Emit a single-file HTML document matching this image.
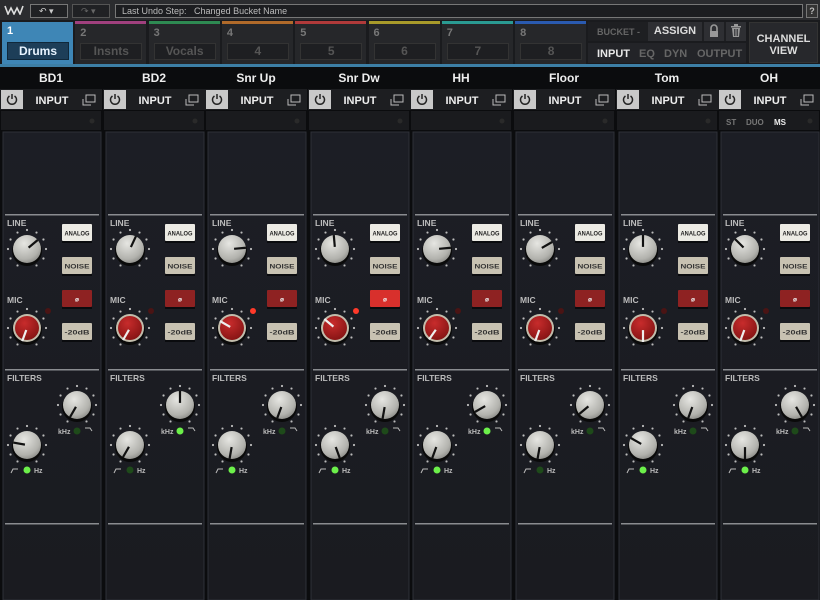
<!DOCTYPE html>
<html><head><meta charset="utf-8"><style>
*{margin:0;padding:0;box-sizing:border-box}
body{width:820px;height:600px;background:#0b0c0e;font-family:"Liberation Sans",sans-serif;position:relative;overflow:hidden;color:#ddd}
.a{position:absolute}
.t{font-weight:bold;font-size:11px;color:#e8e8e8}
</style></head><body>
<div class="a" style="left:0;top:0;width:820px;height:20px;background:#2b2c2f"></div>
<svg class="a" style="left:4px;top:5px" width="20" height="10"><path d="M1 1l3 8 3-6 3 6 3-6 3 6 3-8" fill="none" stroke="#ddd" stroke-width="1.6"/></svg>
<div class="a" style="left:30px;top:4px;width:38px;height:14px;border:1px solid #777;background:#202124;font-size:9px;color:#ccc;padding-left:8px;line-height:12px">↶ ▾</div>
<div class="a" style="left:72px;top:4px;width:38px;height:14px;border:1px solid #555;background:#202124;font-size:9px;color:#666;padding-left:8px;line-height:12px">↷ ▾</div>
<div class="a" style="left:115px;top:4px;width:688px;height:14px;border:1px solid #777;background:#1c1d20;font-size:9px;color:#bbb;padding-left:6px;line-height:12px">Last Undo Step:&nbsp;&nbsp; Changed Bucket Name</div>
<div class="a" style="left:806px;top:4px;width:12px;height:14px;border:1px solid #777;background:#333;font-size:9px;color:#bbb;text-align:center;line-height:12px;font-weight:bold">?</div>
<div class="a" style="left:0;top:20px;width:820px;height:46px;background:#1a1b1e"></div>
<div id="bk"></div>
<div class="a" style="left:0;top:64px;width:820px;height:3px;background:#3d7fa6"></div>
<div class="a" style="left:588px;top:22px;width:158px;height:19px;background:#1e1f22"></div>
<div class="a" style="left:597px;top:27px;font-size:9px;font-weight:bold;color:#666">BUCKET -</div>
<div class="a" style="left:648px;top:22px;width:54px;height:19px;background:#2e2f33;font-size:11px;font-weight:bold;color:#ddd;text-align:center;line-height:19px">ASSIGN</div>
<div class="a" style="left:704px;top:22px;width:20px;height:19px;background:#2e2f33"></div>
<svg class="a" style="left:708px;top:24px" width="12" height="14"><path d="M3 7V4a3 3 0 0 1 6 0v3" fill="none" stroke="#999" stroke-width="1.6"/><rect x="2" y="7" width="8" height="6" fill="#999"/></svg>
<div class="a" style="left:726px;top:22px;width:20px;height:19px;background:#2e2f33"></div>
<svg class="a" style="left:730px;top:24px" width="12" height="14"><rect x="1" y="2" width="10" height="1.5" fill="#999"/><rect x="4" y="0" width="4" height="2" fill="#999"/><path d="M2 4h8l-1 9H3z" fill="#999"/><path d="M4.5 5v7M6 5v7M7.5 5v7" stroke="#2e2f33" stroke-width=".8"/></svg>
<div class="a" style="left:588px;top:43px;width:158px;height:20px;background:#232428"></div>
<div class="a" style="left:597px;top:48px;font-size:11px;font-weight:bold;color:#e8e8e8">INPUT</div>
<div class="a" style="left:639px;top:48px;font-size:11px;font-weight:bold;color:#666">EQ</div>
<div class="a" style="left:664px;top:48px;font-size:11px;font-weight:bold;color:#666">DYN</div>
<div class="a" style="left:697px;top:48px;font-size:11px;font-weight:bold;color:#666">OUTPUT</div>
<div class="a" style="left:749px;top:22px;width:69px;height:41px;background:#27282c;border:1px solid #333;font-size:11px;font-weight:bold;color:#ddd;text-align:center;padding-top:10px;line-height:12px">CHANNEL<br>VIEW</div>
<div id="st"></div>
<script>
var cols=['#3d88b8','#a0407e','#2e8a52','#b06a2a','#b03a3a','#a89a2a','#2a9a92','#2a5ab0'];
var nm=['Drums','Insnts','Vocals','4','5','6','7','8'];
var h='';
for(var i=0;i<8;i++){var x=2+i*73.3;
 if(i==0){h+='<div class="a" style="left:'+x+'px;top:22px;width:71px;height:42px;background:#3e86b6"></div><div class="a t" style="left:'+(x+5)+'px;top:25px;font-size:11px;color:#fff">1</div><div class="a" style="left:'+(x+5)+'px;top:42px;width:62px;height:18px;background:#1d3e58;border:1px solid #10283a;font-size:12px;font-weight:bold;color:#e8f4ff;text-align:center;line-height:16px">Drums</div>';}
 else{h+='<div class="a" style="left:'+x+'px;top:21px;width:71px;height:3px;background:'+cols[i]+'"></div><div class="a" style="left:'+x+'px;top:24px;width:71px;height:40px;background:#26272a"></div><div class="a t" style="left:'+(x+5)+'px;top:27px;font-size:11px;color:#777">'+(i+1)+'</div><div class="a" style="left:'+(x+5)+'px;top:43px;width:62px;height:17px;background:#1e1f22;border:1px solid #333;font-size:12px;font-weight:bold;color:#555;text-align:center;line-height:15px">'+nm[i]+'</div>';}
}
document.getElementById('bk').innerHTML=h;
var ch=['BD1','BD2','Snr Up','Snr Dw','HH','Floor','Tom','OH'];
var la=[50,25,85,-5,85,60,0,-45], ma=[200,210,-60,-50,215,200,180,200], ha=[210,0,200,190,240,230,200,150], lo=[-80,210,190,160,200,190,-60,180];
var phOn=[0,0,0,1,0,0,0,0], ledR=[0,0,1,1,0,0,0,0], kOn=[0,1,0,0,1,0,0,0], hOn=[1,0,1,1,1,0,1,1];
function knob(cx,cy,r,a,red){var s='';for(var k=0;k<11;k++){var ang=(-150+k*30)*Math.PI/180;if(k==5)ang=0;var rr=r+5;s+='<circle cx="'+(cx+rr*Math.sin(ang))+'" cy="'+(cy-rr*Math.cos(ang))+'" r="1.1" fill="#bbb"/>';}
 var rad=a*Math.PI/180;
 s+='<circle cx="'+cx+'" cy="'+(cy+2)+'" r="'+(r+1)+'" fill="#0a0a0a"/>';
 if(red){s+='<circle cx="'+cx+'" cy="'+cy+'" r="'+r+'" fill="#c2bdac"/><circle cx="'+cx+'" cy="'+cy+'" r="'+(r-2)+'" fill="url(#rg)"/>';}
 else s+='<circle cx="'+cx+'" cy="'+cy+'" r="'+r+'" fill="url(#wg)"/>';
 s+='<line x1="'+(cx+(r*0.15)*Math.sin(rad))+'" y1="'+(cy-(r*0.15)*Math.cos(rad))+'" x2="'+(cx+r*Math.sin(rad))+'" y2="'+(cy-r*Math.cos(rad))+'" stroke="'+(red?'#eee':'#111')+'" stroke-width="2.2"/>';return s;}
function btn(x,y,t,bg,c){return '<rect x="'+x+'" y="'+(y+1)+'" width="30" height="18" fill="#000" opacity=".6"/><rect x="'+x+'" y="'+y+'" width="30" height="17" rx="1" fill="'+bg+'"/><text x="'+(x+15)+'" y="'+(y+11.5)+'" font-size="6.5" font-weight="bold" fill="'+c+'" text-anchor="middle" font-family="Liberation Sans"'+(t.length>4?' textLength="25" lengthAdjust="spacingAndGlyphs"':'')+'>'+t+'</text>';}
h='<svg class="a" style="left:0;top:0" width="820" height="600"><defs><radialGradient id="wg" cx=".4" cy=".3" r=".8"><stop offset="0" stop-color="#e6e6e2"/><stop offset=".7" stop-color="#b2b2ad"/><stop offset="1" stop-color="#80807c"/></radialGradient><radialGradient id="rg" cx=".4" cy=".3" r=".8"><stop offset="0" stop-color="#c82c2c"/><stop offset="1" stop-color="#801212"/></radialGradient><linearGradient id="pg" x1="0" y1="0" x2="0" y2="1"><stop offset="0" stop-color="#1c1e25"/><stop offset="1" stop-color="#1a1b20"/></linearGradient></defs>';
for(var i=0;i<8;i++){var x=Math.round(i*102.6);
 h+='<text x="'+(x+51)+'" y="82" font-size="12" font-weight="bold" fill="#eee" text-anchor="middle" font-family="Liberation Sans">'+ch[i]+'</text>';
 h+='<rect x="'+x+'" y="89" width="102" height="21" fill="#1d1e21"/><rect x="'+(x+1)+'" y="90" width="22" height="19" fill="#c9c9c9"/><path d="M'+(x+9.5)+' 96a4.5 4.5 0 1 0 5 0" fill="none" stroke="#222" stroke-width="1.5"/><path d="M'+(x+12)+' 94v5" stroke="#222" stroke-width="1.5"/>';
 h+='<text x="'+(x+52)+'" y="104" font-size="11" font-weight="bold" fill="#eee" text-anchor="middle" font-family="Liberation Sans">INPUT</text>';
 h+='<rect x="'+(x+86)+'" y="95" width="9" height="7" fill="none" stroke="#bbb"/><path d="M'+(x+83)+' 99v6h8" fill="none" stroke="#bbb"/>';
 h+='<rect x="'+(x+1)+'" y="111" width="100" height="19" fill="#1a1b1e"/><circle cx="'+(x+92)+'" cy="121" r="2.5" fill="#2a2a2a"/>';
 if(i==7){h+='<text x="'+(x+8)+'" y="125" font-size="8" font-weight="bold" fill="#777" font-family="Liberation Sans">ST</text><text x="'+(x+28)+'" y="125" font-size="8" font-weight="bold" fill="#777" font-family="Liberation Sans">DUO</text><text x="'+(x+56)+'" y="125" font-size="8" font-weight="bold" fill="#eee" font-family="Liberation Sans">MS</text>';}
 h+='<rect x="'+(x+3)+'" y="132" width="98" height="468" fill="url(#pg)" stroke="#2e3038"/>';
 [214,369,523].forEach(function(y){h+='<rect x="'+(x+5)+'" y="'+y+'" width="94" height="1.5" fill="#8a8c90"/>';});
 function lab(t,y){h+='<text x="'+(x+7)+'" y="'+y+'" font-size="8.5" font-weight="bold" fill="#bbb" font-family="Liberation Sans">'+t+'</text>';}
 lab('LINE',226);lab('MIC',303);lab('FILTERS',381);
 h+=knob(x+27,249,14,la[i],0);
 h+=btn(x+62,224,'ANALOG','#ecebe4','#222');
 h+=btn(x+62,257,'NOISE','#c8c2b2','#333');
 h+=btn(x+62,290,'ø',phOn[i]?'#d8302c':'#8e2222','#eee');
 h+=btn(x+62,323,'-20dB','#c8c2b2','#333');
 h+='<circle cx="'+(x+48)+'" cy="311" r="3" fill="'+(ledR[i]?'#ff3a2a':'#4a1414')+'"/>';
 h+=knob(x+27,328,14,ma[i],1);
 h+=knob(x+77,405,14,ha[i],0);
 h+='<text x="'+(x+58)+'" y="434" font-size="7" font-weight="bold" fill="#bbb" font-family="Liberation Sans">kHz</text><circle cx="'+(x+77)+'" cy="431" r="3.5" fill="'+(kOn[i]?'#6cf04a':'#1e4a1a')+'"/><path d="M'+(x+85)+' 428h5l2 3" fill="none" stroke="#bbb"/>';
 h+=knob(x+27,445,14,lo[i],0);
 h+='<path d="M'+(x+11)+' 473l2-4h5" fill="none" stroke="#bbb"/><circle cx="'+(x+27)+'" cy="470" r="3.5" fill="'+(hOn[i]?'#6cf04a':'#1e4a1a')+'"/><text x="'+(x+34)+'" y="473" font-size="7" font-weight="bold" fill="#bbb" font-family="Liberation Sans">Hz</text>';
}
h+='</svg>';
document.getElementById('st').innerHTML=h;
</script>
</body></html>
